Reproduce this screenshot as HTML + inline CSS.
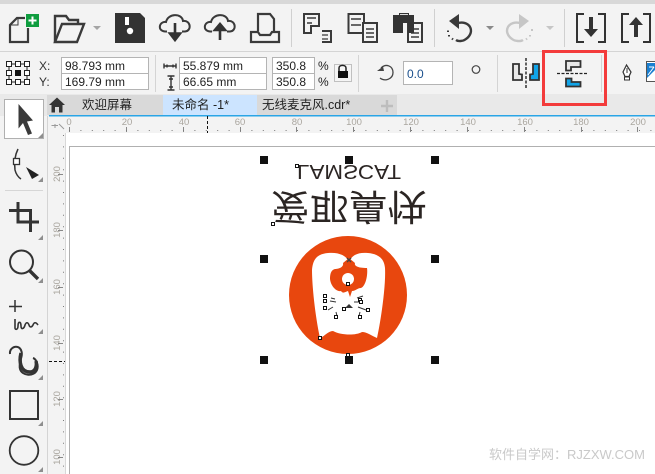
<!DOCTYPE html>
<html><head><meta charset="utf-8"><style>
html,body{margin:0;padding:0;background:#fff}
#r{position:relative;width:655px;height:474px;overflow:hidden;font-family:"Liberation Sans","Noto Sans CJK SC",sans-serif}
svg{position:absolute;left:0;top:0}
text{font-family:"Liberation Sans","Noto Sans CJK SC",sans-serif}
</style></head><body><div id="r">
<svg width="655" height="474" viewBox="0 0 655 474">
<rect width="655" height="474" fill="#f3f3f3"/>
<rect width="655" height="4" fill="#d8d8d8"/>
<rect y="51" width="655" height="1" fill="#d4d4d4"/>
<rect y="94" width="655" height="22" fill="#e9e9e9"/>
<rect x="47" y="95" width="350" height="20" fill="#d9d9d9"/>
<rect x="163" y="95" width="94" height="20" fill="#cce4ff"/>
<rect x="49" y="115" width="606" height="1.500" fill="#2aa5e6"/>
<rect x="47" y="116" width="1" height="358" fill="#d4d4d4"/>
<rect x="65" y="133" width="590" height="341" fill="#fff"/>
<path d="M69.500 474V146.500H655" fill="none" stroke="#b0b0b0"/>
<rect x="65" y="133" width="1" height="341" fill="#d8d8d8"/>

<!-- toolbar icons -->
<g fill="none" stroke="#3a3a3a" stroke-width="2">
<path d="M25 18H17L10 25V42H28V28" stroke-width="2.200"/>
<path d="M18 18V25H10"  stroke-width="1"/>
<path d="M55 42V16H66L69 20H78V24" stroke-width="2.400"/>
<path d="M55 42H77L84 24H62L55 42Z" stroke-width="2.400"/>
<path d="M167 31.500H165C157 31 159 21 166 22C168 13 182 13 183 21C191 20 192 31 185 31.500H182" />
<path d="M212 31.500H210C202 31 204 21 211 22C213 13 227 13 228 21C236 20 237 31 230 31.500H227"/>
<path d="M258 31V14H270L274 19V31M251 32V42H279V32H272L270 35H260L258 32Z" stroke-width="2.200"/>
</g>
<rect x="26" y="14" width="13" height="13" fill="#0f9d3f"/>
<path d="M32.500 16.500V24.500M28.500 20.500H36.500" stroke="#fff" stroke-width="2"/>
<path d="M93 26h8l-4 4z" fill="#a5a5a5"/>
<path d="M115 13H140L145 18V43H115Z" fill="#333"/>
<rect x="125" y="17" width="4" height="8" fill="#fff"/>
<circle cx="130" cy="31" r="3.200" fill="#fff"/>
<path d="M175 23V35M170 33.500L175 40L180 33.500Z" stroke="#333" stroke-width="2.600" fill="#333"/>
<path d="M220 40V28M215 30L220 24L225 30Z" stroke="#333" stroke-width="2.600" fill="#333"/>

<rect x="291" y="9" width="1" height="38" fill="#d0d0d0"/>
<rect x="434" y="9" width="1" height="38" fill="#d0d0d0"/>
<rect x="564" y="9" width="1" height="38" fill="#d0d0d0"/>

<!-- cut -->
<g fill="none" stroke="#3a3a3a" stroke-width="2">
<path d="M304 14H319V26H311V33H304Z"/>
<path d="M307 18H316" stroke-width="1.500"/><path d="M307 23H312" stroke-width="1.500"/>
<path d="M322 31H331V42H322" /><path d="M322 35H328M322 39H328" stroke-width="1.300"/>
<path d="M348.500 14H364V33H348.500Z"/>
<path d="M351 19H361M351 25H361" stroke-width="1.600"/>
<rect x="363" y="23" width="14" height="19" fill="#f3f3f3"/>
<path d="M366 29H374M366 33H374M366 37H374" stroke-width="1.500"/>
<rect x="408" y="23" width="14" height="19" fill="#f3f3f3"/>
<path d="M411 29H419M411 33H419M411 37H419" stroke-width="1.500"/>
</g>
<path d="M393 15H399V13H409V15H414V33H408V23H403V33H393Z" fill="#333"/>
<path d="M400 14.500H408" stroke="#ddd"/>

<!-- undo/redo -->
<path d="M456 23.500C470 19 476 32 466 39C463 41.500 458 41.500 456 40" fill="none" stroke="#3a3a3a" stroke-width="2.400"/>
<path d="M459 14V29L449 21Z" fill="#3a3a3a"/>
<path d="M448 30.500v1.500M449 35v1.500M452 38.500l1 1" stroke="#3a3a3a" stroke-width="2" fill="none"/>
<path d="M486 26h8l-4 4z" fill="#8a8a8a"/>
<path d="M522 23.500C508 19 502 32 512 39C515 41.500 521 41.500 523 40" fill="none" stroke="#c6c6c6" stroke-width="2.400"/>
<path d="M519 14V29L529 21Z" fill="#c6c6c6"/>
<path d="M532 29v2M530 35v1.500M527 38.500l-1 1" stroke="#c6c6c6" stroke-width="2"/>
<path d="M546 26h8l-4 4z" fill="#c6c6c6"/>

<!-- import/export -->
<g fill="none" stroke="#333" stroke-width="2">
<path d="M584 14H577V42H584M598 14H605V42H598"/>
<path d="M629 14H622V42H629M643 14H650V42H643"/>
</g>
<path d="M589 17H593V29H598L591 37L584 29H589Z" fill="#333"/>
<path d="M634 37H638V25H643L636 17L629 25H634Z" fill="#333"/>

<!-- position grid -->
<g fill="#fff" stroke="#222" stroke-width="1">
<rect x="6.500" y="61.500" width="5" height="5"/><rect x="15.500" y="61.500" width="5" height="5"/><rect x="24.500" y="61.500" width="5" height="5"/>
<rect x="6.500" y="70.500" width="5" height="5"/><rect x="24.500" y="70.500" width="5" height="5"/>
<rect x="6.500" y="79.500" width="5" height="5"/><rect x="15.500" y="79.500" width="5" height="5"/><rect x="24.500" y="79.500" width="5" height="5"/>
</g>
<rect x="15" y="70" width="6" height="6" fill="#111"/>
<path d="M11 64h5M20 64h5M9 66v5M27 66v5M9 75v5M27 75v5M11 82h5M20 82h5" stroke="#222" stroke-width="1"/>

<!-- inputs -->
<g fill="#fff" stroke="#b4b4b4">
<rect x="61.500" y="57.500" width="87" height="16"/><rect x="61.500" y="73.500" width="87" height="16"/>
<rect x="179.500" y="57.500" width="87" height="16"/><rect x="179.500" y="73.500" width="87" height="16"/>
<rect x="272.500" y="57.500" width="42" height="16"/><rect x="272.500" y="73.500" width="42" height="16"/>
<rect x="403.500" y="61.500" width="49" height="23"/>
<rect x="334.500" y="64.500" width="17" height="17" fill="#f5f5f5" stroke="#c0c0c0"/>
</g>
<rect x="155" y="55" width="1" height="37" fill="#d4d4d4"/>
<rect x="358" y="55" width="1" height="37" fill="#d4d4d4"/>
<rect x="497" y="55" width="1" height="37" fill="#d4d4d4"/>
<rect x="601" y="55" width="1" height="37" fill="#d4d4d4"/>
<g font-size="12" fill="#222">
<text x="39" y="70" fill="#333">X:</text><text x="39" y="86" fill="#333">Y:</text>
<text x="65" y="70">98.793 mm</text><text x="65" y="86">169.79 mm</text>
<text x="183" y="70">55.879 mm</text><text x="183" y="86">66.65 mm</text>
<text x="276" y="70">350.8</text><text x="276" y="86">350.8</text>
<text x="318" y="70">%</text><text x="318" y="86">%</text>
<text x="407" y="78" fill="#1a4f8c">0.0</text>
</g>
<path d="M164 66H176M164 63.500V68.500M176 63.500V68.500M167 64.500V67.500M173 64.500V67.500" stroke="#333" stroke-width="1.400"/>
<path d="M171 76V90M167.500 76H174.500M167.500 90H174.500M169 79H173M169 87H173" stroke="#333" stroke-width="1.400"/>
<path d="M339 71V68C339 64.500 346 64.500 346 68V71" fill="none" stroke="#222" stroke-width="1.500"/>
<rect x="338" y="71" width="10" height="7" fill="#111"/>

<path d="M381 68C386 63 393 66 393 72.500C393 79 385 82 380 78" fill="none" stroke="#444" stroke-width="1.300"/>
<path d="M383 66.500L377 71H384Z" fill="#444"/>
<circle cx="476" cy="69.500" r="3.800" fill="none" stroke="#444" stroke-width="1.200"/>

<!-- mirror H -->
<path d="M513 64H519V74L522 74.500V80H513Z" fill="#e8e8e8" stroke="#333" stroke-width="1.800"/>
<path d="M539 64H533V74L530 74.500V80H539Z" fill="#11a4e8" stroke="#333" stroke-width="1.800"/>
<path d="M526 58V88" stroke="#222" stroke-width="1.400" stroke-dasharray="3 1.500"/>
<!-- mirror V -->
<path d="M566 61H580.500V67H571V70.500H566Z" fill="#e8e8e8" stroke="#333" stroke-width="1.800"/>
<path d="M566 86.500V78.500H571.500V82H580.500V86.500Z" fill="#11a4e8" stroke="#333" stroke-width="1.800"/>
<path d="M557 73.500H588" stroke="#222" stroke-width="1.300" stroke-dasharray="3 1.500"/>
<rect x="543.500" y="51.500" width="62" height="53" fill="none" stroke="#f33b3b" stroke-width="3"/>
<!-- pen -->
<path d="M626.500 65L623 72L625 76.500H629L631 72Z" fill="#fff" stroke="#333" stroke-width="1.200"/>
<path d="M624.500 77H629.500V80H624.500Z" fill="#fff" stroke="#333"/>
<path d="M627 68V73" stroke="#333"/>
<rect x="646.500" y="61.500" width="12" height="20" fill="#fff" stroke="#555"/>
<path d="M647 63H655V70L647 78Z" fill="#1a7fd0"/>
<path d="M649 67H654M654 67L648 75" stroke="#fff"/>

<!-- tabs -->
<path d="M57 97.500L49 105H51.500V112.500H55V107H59V112.500H62.500V105H65Z" fill="#333"/>
<g font-size="12.500" fill="#222">
<text x="82" y="109">欢迎屏幕</text>
<text x="172" y="109">未命名 -1*</text>
<text x="262" y="109">无线麦克风.cdr*</text>
</g>
<path d="M381 106H393M387 100V112" stroke="#bdbdbd" stroke-width="2.400"/>

<!-- left tools -->
<rect x="4.500" y="99.500" width="39" height="39" fill="#fff" stroke="#b0b0b0"/>
<path d="M18.500 104V128.500L23 123L28 135L32 133.500L27 121.500L33 120.500Z" fill="#3a3a3a"/>
<g fill="#8e8e8e"><path d="M43 133v5h-5zM43 177v5h-5zM43 235v5h-5zM43 278v5h-5zM43 329v5h-5zM43 375v5h-5zM43 421v5h-5zM43 467v5h-5z"/></g>
<path d="M5 190.500H43" stroke="#d6d6d6"/>
<path d="M18 149C15 155 14 162 15 170C16 174 18 177 21 179" fill="none" stroke="#333" stroke-width="1.500"/>
<rect x="13.500" y="158.500" width="6" height="6" fill="#fff" stroke="#333" stroke-width="1.300"/>
<path d="M26 167L39 175L32 179Z" fill="#222"/>
<path d="M9 210.500H30.500V222H18V210M18 202V210M18 222H39M30.500 222V232" fill="none" stroke="#333" stroke-width="3"/>
<circle cx="21.500" cy="262" r="11.500" fill="none" stroke="#333" stroke-width="2"/>
<path d="M29.500 270.500L38 279" stroke="#333" stroke-width="3.400"/>
<path d="M15 300V312M9 306.500H22" stroke="#333" stroke-width="1.500"/>
<path d="M15 319V328C15 330 18 330 18 326C18 321 21 321 21 326C21 330 24 329 25 325C26 322 28 322 29 325C30 328 32 327 33 325C34 322 36 322 38 325" fill="none" stroke="#333" stroke-width="1.600"/>
<path d="M10 354C9 347 18 344 21 350C24 356 18 362 20 369C22 376 34 377 37 370C39 365 36 359 33 358" fill="none" stroke="#333" stroke-width="2"/>
<path d="M21 353C19 361 20 372 30 372C36 372 37 365 36 361" fill="none" stroke="#333" stroke-width="3.500"/>
<rect x="10" y="391" width="28" height="28" fill="none" stroke="#333" stroke-width="2"/>
<circle cx="24" cy="450.500" r="14.300" fill="none" stroke="#333" stroke-width="1.800"/>

<!-- ruler h -->
<path d="M55 124V128M51.500 125.500H58M59 124L64 129" stroke="#9a9a9a" stroke-width="1" fill="none"/>
<g font-size="9.500" fill="#aaa69f" text-anchor="middle">
<text x="69" y="125">0</text><text x="127" y="125">20</text><text x="184" y="125">40</text><text x="240" y="125">60</text><text x="297" y="125">80</text><text x="354" y="125">100</text><text x="411" y="125">120</text><text x="468" y="125">140</text><text x="525" y="125">160</text><text x="581" y="125">180</text><text x="638" y="125">200</text>
</g>
<g stroke="#888">
<path d="M69.500 127V132M126.500 127V132M183.500 127V132M240.500 127V132M296.500 127V132M353.500 127V132M410.500 127V132M467.500 127V132M524.500 127V132M581.500 127V132M637.500 127V132"/>
</g>
<path d="M69 130.500H655" stroke="#7a7a7a" stroke-dasharray="1 10.400" stroke-dashoffset="-0"/>
<path d="M207.500 116V133" stroke="#111" stroke-dasharray="3 2"/>
<!-- ruler v -->
<g font-size="9.500" fill="#aaa69f" text-anchor="middle">
<text transform="translate(60,174) rotate(-90)">200</text>
<text transform="translate(60,230) rotate(-90)">180</text>
<text transform="translate(60,287) rotate(-90)">160</text>
<text transform="translate(60,343) rotate(-90)">140</text>
<text transform="translate(60,399) rotate(-90)">120</text>
<text transform="translate(60,457) rotate(-90)">100</text>
</g>
<path d="M63 174.500H58M63 230.500H58M63 287.500H58M63 343.500H58M63 399.500H58M63 457.500H58" stroke="#888"/>
<path d="M63.500 135V474" stroke="#7a7a7a" stroke-dasharray="1 10.400"/>
<path d="M49 361.500H65" stroke="#111" stroke-dasharray="3 2"/>

<!-- artwork -->
<circle cx="348" cy="295" r="59" fill="#e8470e"/>
<path d="M349 262C346 255 338 252 328 253C318 254 313 258 312 270C312 285 315 315 320 338C325 336 328 331 333 331C340 335 355 336 362 332C367 332 372 336 377 338C381 320 386 285 385 268C384 258 378 254 368 253C358 252 352 255 349 262Z" fill="#fff"/>
<path d="M343 263L349 258L355 263C354 266 358 268 367 268C368 274 366 286 361 288C357 288 356 291 352 291L350 297L348 291C345 292 343 294 341 291C337 292 331 287 330 279C330 274 331 270 335 269C339 269 344 267 343 263Z" fill="#e8470e"/>
<circle cx="348" cy="279" r="6" fill="#fff"/>
<path d="M345 308L349 304L353 308Z" fill="#333"/>
<path d="M335 299L331 298M336 302L330 301M333 307L328 310M363 296L357 298M361 302L354 302M358 307L366 310M336 312L337 316M360 312L359 316" stroke="#333" stroke-width="1" fill="none"/>
<g fill="#fff" stroke="#111" stroke-width="1">
<rect x="323.500" y="294.500" width="3" height="3"/><rect x="323.500" y="299.500" width="3" height="3"/><rect x="323.500" y="306.500" width="3" height="3"/>
<rect x="358.500" y="298.500" width="3" height="3"/><rect x="359.500" y="300.500" width="3" height="3"/><rect x="366.500" y="308.500" width="3" height="3"/>
<rect x="334.500" y="315.500" width="3" height="3"/><rect x="358.500" y="315.500" width="3" height="3"/><rect x="342.500" y="307.500" width="3" height="3"/>
<rect x="346.500" y="282.500" width="3" height="3"/><rect x="318.500" y="336.500" width="3" height="3"/>
<rect x="346.500" y="353.500" width="3" height="3"/>
</g>
<path d="M347 258L351 262M351 258L347 262" stroke="#444" stroke-width="1.300"/>

<g fill="#111">
<rect x="260" y="156" width="8" height="8"/><rect x="345" y="156" width="8" height="8"/><rect x="431" y="156" width="8" height="8"/>
<rect x="260" y="255" width="8" height="8"/><rect x="431" y="255" width="8" height="8"/>
<rect x="260" y="356" width="8" height="8"/><rect x="345" y="356" width="8" height="8"/><rect x="431" y="356" width="8" height="8"/>
</g>
<text transform="translate(297,165) scale(1,-1)" font-size="20" fill="#2b2523" textLength="104" lengthAdjust="spacingAndGlyphs" y="0">LAMSCAT</text>
<text transform="translate(271,194) scale(1.080,-1)" font-size="36" fill="#2b2523" y="0">爱耶鼻快</text>
<g fill="#fff" stroke="#111" stroke-width="1">
<rect x="295.500" y="164.500" width="3" height="3"/>
<rect x="271.500" y="222.500" width="3" height="3"/>
</g>
<text x="489" y="459" font-size="13" fill="#c9c9c9">软件自学网：RJZXW.COM</text>
</svg>
</div></body></html>
